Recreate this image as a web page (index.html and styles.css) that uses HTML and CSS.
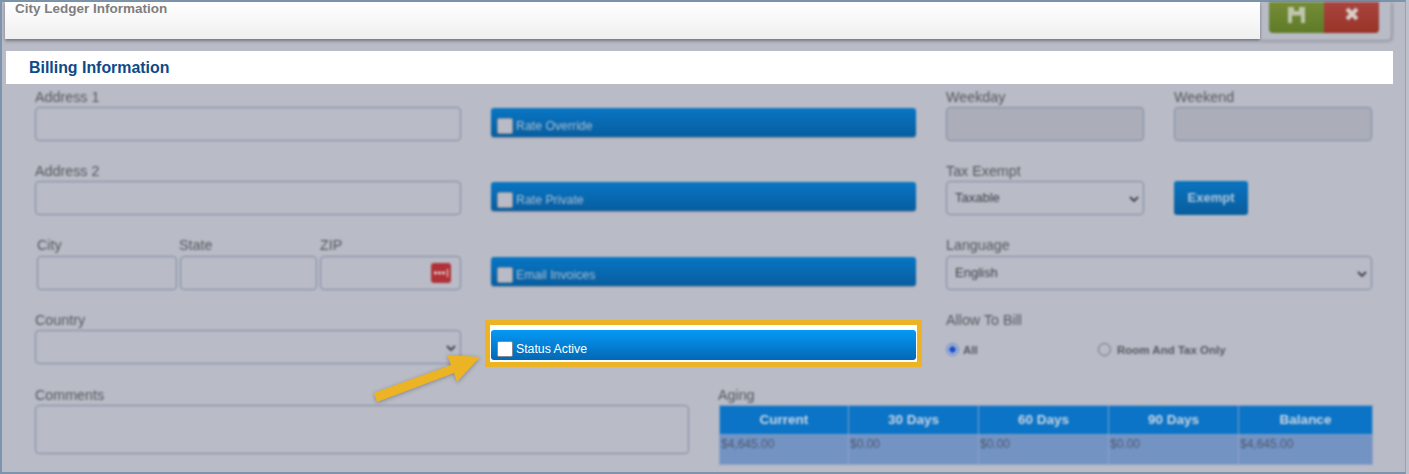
FILE: index.html
```html
<!DOCTYPE html>
<html lang="en">
<head>
<meta charset="utf-8">
<title>City Ledger Information</title>
<link rel="stylesheet" href="styles.css">
</head>
<body>
<div class="frame">
  <header class="topbar">
    <div class="title-bar"><span class="title">City Ledger Information</span></div>
    <div class="actions soft">
      <button class="act act-save" type="button" aria-label="Save">
        <svg width="17" height="16" viewBox="0 0 17 16"><path d="M0 0H6V4H11V0H17V16H13V8.500H4V16H0Z" fill="#bfc6ae"/></svg>
      </button>
      <button class="act act-close" type="button" aria-label="Close">
        <svg width="14" height="14" viewBox="0 0 14 14"><path d="M2 2L12 12M12 2L2 12" stroke="#d9cfcb" stroke-width="4"/></svg>
      </button>
    </div>
  </header>

  <h2 class="section">Billing Information</h2>

  <div class="form">
    <div class="grid">
      <div class="cell soft"><label class="lbl">Address 1</label><input class="field"></div>
      <div class="cell cell-btn soft"><div class="check-btn"><span class="box"></span>Rate Override</div></div>
      <div class="cell split soft">
        <div><label class="lbl">Weekday</label><input class="field field-off"></div>
        <div><label class="lbl">Weekend</label><input class="field field-off"></div>
      </div>

      <div class="cell soft"><label class="lbl">Address 2</label><input class="field"></div>
      <div class="cell cell-btn soft"><div class="check-btn"><span class="box"></span>Rate Private</div></div>
      <div class="cell split soft">
        <div>
          <label class="lbl">Tax Exempt</label>
          <div class="pick"><span>Taxable</span><svg class="chev" width="10" height="7" viewBox="0 0 10 7"><path d="M1 1L5 5L9 1" fill="none" stroke="#3c3f48" stroke-width="1.8"/></svg></div>
        </div>
        <div class="exempt-wrap"><div class="exempt">Exempt</div></div>
      </div>

      <div class="cell cell-r3 soft">
        <div class="addr">
          <div class="a-city"><label class="lbl">City</label><input class="field"></div>
          <div class="a-state"><label class="lbl">State</label><input class="field"></div>
          <div class="a-zip">
            <label class="lbl">ZIP</label>
            <div class="zipbox">
              <input class="field">
              <svg class="lp" width="20" height="20" viewBox="0 0 20 20"><rect width="20" height="20" rx="3" fill="#b03238"/><circle cx="4.5" cy="10" r="1.4" fill="#eee"/><circle cx="8.5" cy="10" r="1.4" fill="#eee"/><circle cx="12.500" cy="10" r="1.400" fill="#eee"/><rect x="16" y="6" width="1" height="8" fill="#eee"/></svg>
            </div>
          </div>
        </div>
      </div>
      <div class="cell cell-btn cell-r3b soft"><div class="check-btn"><span class="box"></span>Email Invoices</div></div>
      <div class="cell cell-r3 soft">
        <label class="lbl lbl-tight">Language</label>
        <div class="pick"><span>English</span><svg class="chev" width="10" height="7" viewBox="0 0 10 7"><path d="M1 1L5 5L9 1" fill="none" stroke="#3c3f48" stroke-width="1.8"/></svg></div>
      </div>

      <div class="cell soft">
        <label class="lbl">Country</label>
        <div class="pick"><span></span><svg class="chev" width="10" height="7" viewBox="0 0 10 7"><path d="M1 1L5 5L9 1" fill="none" stroke="#3c3f48" stroke-width="1.8"/></svg></div>
      </div>
      <div class="cell cell-hl">
        <div class="highlight"><div class="check-btn check-btn-on"><span class="box box-on"></span>Status Active</div></div>
      </div>
      <div class="cell soft">
        <label class="lbl">Allow To Bill</label>
        <div class="radios">
          <span class="radio-item"><span class="radio radio-on"></span>All</span>
          <span class="radio-item"><span class="radio"></span>Room And Tax Only</span>
        </div>
      </div>
    </div>

    <div class="lower">
      <div class="soft"><label class="lbl">Comments</label><textarea class="field notes"></textarea></div>
      <div class="soft">
        <label class="lbl">Aging</label>
        <table class="aging">
          <thead><tr><th>Current</th><th>30 Days</th><th>60 Days</th><th>90 Days</th><th>Balance</th></tr></thead>
          <tbody><tr><td>$4,645.00</td><td>$0.00</td><td>$0.00</td><td>$0.00</td><td>$4,645.00</td></tr></tbody>
        </table>
      </div>
    </div>
  </div>

  <svg class="arrow" width="120" height="60" viewBox="0 0 120 60"><polygon points="4,45 81,17 77,7 110,9 87,34 84,25 7,54" fill="#ecb424"/></svg>
</div>
</body>
</html>
```
FILE: styles.css
```css
* { box-sizing: border-box; }
html, body { margin: 0; height: 100%; }
body {
  background: #bcc0ca;
  font-family: "Liberation Sans", Arial, sans-serif;
  overflow: hidden;
}
.frame {
  position: relative;
  width: 1406px;
  height: 474px;
  border: 2px solid #7c95ad;
  border-right: 1px solid #97a3b5;
  background: #b9bcc6;
}
.soft { filter: blur(0.8px); }

/* top bar */
.topbar { display: flex; align-items: flex-start; padding-left: 3px; height: 38px; }
.title-bar {
  flex: none;
  width: 1255px;
  height: 37px;
  background: linear-gradient(#ffffff, #efefef);
  box-shadow: 0 2px 3px rgba(60, 60, 70, .55);
  padding-left: 10px;
  position: relative;
  z-index: 1;
}
.title { display: block; font-size: 13.500px; font-weight: 700; color: #7e7e80; line-height: 13px; }
.actions {
  flex: none;
  width: 131px;
  height: 38px;
  padding-left: 9px;
  display: flex;
  align-items: flex-start;
  box-shadow: 1px 1px 3px rgba(70, 70, 85, .5);
  border-radius: 0 0 4px 0;
}
.act {
  width: 55px;
  height: 31px;
  border: 0;
  padding: 5px 0 0;
  display: flex;
  justify-content: center;
  align-items: flex-start;
}
.act-save { background: linear-gradient(#758c36, #5f7b28); border-radius: 0 0 0 4px; }
.act-close { background: linear-gradient(#a8453f, #993327); border-radius: 0 0 4px 0; }

/* section */
.section {
  margin: 11px 0 0 4px;
  width: 1387px;
  height: 33px;
  background: #fff;
  padding-left: 23px;
  font-size: 15.900px;
  line-height: 33px;
  font-weight: 700;
  color: #0c4a88;
}

/* form */
.form { padding: 5px 0 0 33px; }
.grid {
  display: grid;
  grid-template-columns: 426px 425px 426px;
  grid-template-rows: 74px 74px 75px 75px;
  column-gap: 30px;
}
.lbl {
  display: block;
  height: 16px;
  font-size: 14.300px;
  line-height: 17px;
  color: #55575f;
  margin-bottom: 2px;
}
.lbl-tight { margin-bottom: 3px; }
.field {
  display: block;
  width: 100%;
  height: 34px;
  background: transparent;
  border: 1.500px solid #7f8aa3;
  border-radius: 4px;
  padding: 0;
  outline: 0;
}
.field-off { background: #abaeb8; }
.notes { height: 49px; resize: none; }

/* check buttons */
.cell-btn { padding-top: 19px; }
.cell-r3b { padding-top: 20px; }
.check-btn {
  display: flex;
  align-items: center;
  height: 29px;
  padding: 6px 0 0 6px;
  border-radius: 3px;
  background: linear-gradient(#0876c4, #085d9f);
  color: #a9bfd3;
  font-size: 12.300px;
  box-shadow: 0 1px 1px rgba(70, 80, 100, .4);
}
.box {
  width: 16px;
  height: 16px;
  margin-right: 3px;
  background: #b9bcc6;
  border: 1px solid #8c909c;
  border-radius: 2px;
}
.cell-hl { padding-top: 8px; }
.highlight {
  margin: 0 -6px;
  height: 47px;
  background: #fff;
  border: 5px solid #ecb424;
  padding: 5px 1px 0;
}
.check-btn-on {
  height: 30px;
  padding-top: 7px;
  color: #fff;
  background: linear-gradient(#0599f6, #0368b4);
  box-shadow: none;
}
.box-on { background: #fff; border-color: #858a94; }

/* right column */
.split { display: grid; grid-template-columns: 198px 198px; column-gap: 30px; }
.exempt-wrap { padding-top: 18px; }
.exempt {
  width: 74px;
  height: 34px;
  border-radius: 3px;
  background: linear-gradient(#0a74c0, #095d9e);
  color: #b0c6dc;
  font-size: 13px;
  font-weight: 700;
  text-align: center;
  line-height: 34px;
}
.pick {
  position: relative;
  height: 34px;
  border: 1.500px solid #7f8aa3;
  border-radius: 4px;
  padding-left: 8px;
  font-size: 13px;
  line-height: 32px;
  color: #3e4049;
}
.chev { position: absolute; right: 4px; top: 14px; }

/* address row */
.addr { display: grid; grid-template-columns: 140px 137px 141px; column-gap: 3px; padding-left: 2px; }
.a-state .lbl { margin-left: -1px; }
.cell-r3 .lbl { margin-bottom: 3px; }
.zipbox { position: relative; }
.lp { position: absolute; right: 10px; top: 7px; }

/* radios */
.radios { display: flex; padding-top: 14px; font-size: 11.500px; font-weight: 700; color: #55575f; }
.radio-item { display: flex; align-items: center; gap: 6px; }
.radio-item:first-child { width: 152px; gap: 4px; }
.radio { width: 13px; height: 13px; border: 1px solid #6d7079; border-radius: 50%; margin-top: -2px; }
.radio-on { background: radial-gradient(circle, #1b4fc6 0 3px, #a7b6da 3.500px); border-color: #5f7fd0; }

/* lower */
.lower { display: grid; grid-template-columns: 654px 654px; column-gap: 29px; }
.aging { width: 653px; margin-left: 1px; border-collapse: collapse; table-layout: fixed; }
.aging th {
  width: 130px;
  height: 29px;
  background: #0b74c6;
  border: 1px solid #7f9fc8;
  color: #cbd6e4;
  font-size: 13.500px;
  font-weight: 700;
  padding: 0 0 2px;
}
.aging th:first-child { width: 129px; }
.aging th:last-child { width: 134px; }
.aging td {
  height: 30px;
  background: #7393c3;
  border: 1px solid #8ba3cb;
  color: #4f5a70;
  font-size: 12px;
  vertical-align: top;
  padding: 2px 1px 0;
}

/* arrow overlay */
.arrow {
  position: absolute;
  left: 368px;
  top: 346px;
  filter: drop-shadow(0 1px 2px rgba(70, 70, 70, .45));
}
```
